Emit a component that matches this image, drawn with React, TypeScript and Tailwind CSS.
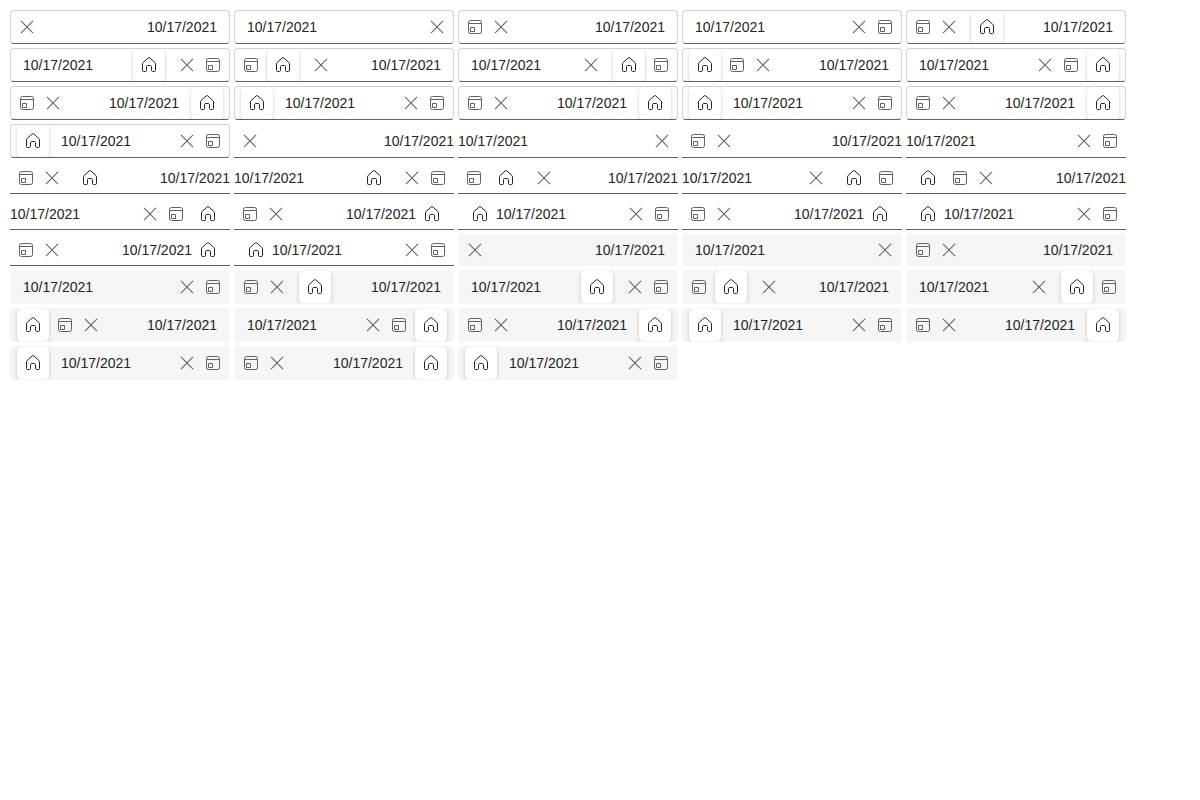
type Kind = "outlined" | "underlined" | "filled";
type Part = "T" | "H" | "C" | "X";

const CalendarIcon = () => (
  <svg className="block size-4 text-[#616161]" viewBox="0 0 16 16" fill="none" stroke="currentColor">
    <rect x="1.5" y="1.5" width="13" height="13" rx="2" />
    <path d="M1.5 4.5H14.5" />
    <path d="M3.5 8.5H7.5V12.5H3.5Z" />
  </svg>
);

const ClearIcon = () => (
  <svg className="block size-4 text-[#616161]" viewBox="0 0 16 16" fill="none" stroke="currentColor" strokeWidth="1.05" strokeLinecap="round">
    <path d="M2.2 2.2L13.8 13.8M13.8 2.2L2.2 13.8" />
  </svg>
);

const HomeIcon = () => (
  <svg className="block size-4 text-[#242424]" viewBox="0 0 16 16" fill="none" stroke="currentColor" strokeLinejoin="round">
    <path d="M1.5 6.9C1.5 6.3 1.7 5.9 2.1 5.5L7.2 0.9C7.7 0.5 8.3 0.5 8.8 0.9L13.9 5.5C14.3 5.9 14.5 6.3 14.5 6.9V13.4C14.5 14.1 14.1 14.5 13.4 14.5H11.5C10.9 14.5 10.5 14.1 10.5 13.4V9.7C10.5 8.9 10 8.5 9.3 8.5H6.7C6 8.5 5.5 8.9 5.5 9.7V13.4C5.5 14.1 5.1 14.5 4.5 14.5H2.6C1.9 14.5 1.5 14.1 1.5 13.4Z" />
  </svg>
);

const frames: Record<Kind, string> = {
  outlined: "rounded border border-[#d1d1d1] border-b-[#616161]",
  underlined: "border-b border-[#616161]",
  filled: "rounded bg-[#f5f5f5] border border-transparent",
};

function DateBox({ kind, parts }: { kind: Kind; parts: string }) {
  const list = parts.split("") as Part[];
  const flat = kind === "underlined";
  const textAt = list.indexOf("T");
  const hasHome = list.includes("H");
  const rtl = parts.endsWith("T") || parts.endsWith("TH");
  const height = flat ? "min-h-8" : kind === "outlined" || hasHome ? "min-h-[34px]" : "min-h-8";

  const homeMargin = (i: number) => {
    if (i === 0) return flat ? "ml-1.5" : "ml-1.5 mr-[3px]";
    if (i === list.length - 1) return flat ? "mr-1.5" : "mr-1.5 ml-[3px]";
    return rtl
      ? list[i - 1] === "X" ? "ml-[9px]" : "ml-[3px] mr-[9px]"
      : list[i + 1] === "X" ? "mr-[9px]" : "ml-[9px] mr-[3px]";
  };
  const flatHomeGap = (i: number) => {
    if (!flat) return "";
    if (i === 0 && list[1] !== "T") return "mr-[3px]";
    if (i === list.length - 1 && list[i - 1] !== "T") return "ml-[3px]";
    return "";
  };
  const iconEdge = (i: number) => (i === 0 ? "ml-[3px]" : i === list.length - 1 ? "mr-[3px]" : "");

  return (
    <div className={`flex w-[220px] items-center overflow-hidden ${height} ${frames[kind]}`}>
      {list.map((part, i) => {
        if (part === "T") {
          const pad = flat ? "" : textAt === 0 || textAt === list.length - 1 ? "px-3" : rtl ? "pr-[9px]" : "pl-[9px]";
          return (
            <div key={i} className={`grow text-sm leading-5 text-[#242424] ${rtl ? "text-right" : "text-left"} ${pad}`}>
              10/17/2021
            </div>
          );
        }
        if (part === "H") {
          const look = flat ? "" : "bg-white shadow-[0_0_2px_rgba(0,0,0,0.12),0_2px_4px_rgba(0,0,0,0.14)]";
          return (
            <button
              key={i}
              className={`-my-px flex h-8 w-8 shrink-0 items-center justify-center rounded ${look} ${homeMargin(i)} ${flatHomeGap(i)}`}
            >
              <HomeIcon />
            </button>
          );
        }
        return (
          <div key={i} className={`flex w-[26px] shrink-0 items-center justify-center ${iconEdge(i)}`}>
            {part === "C" ? <CalendarIcon /> : <ClearIcon />}
          </div>
        );
      })}
    </div>
  );
}

const variants = [
  "XT", "TX", "CXT", "TXC",
  "CXHT", "THXC", "CHXT", "TXHC", "HCXT", "TXCH",
  "CXTH", "HTXC", "CXTH", "HTXC", "CXTH", "HTXC",
];
const kinds: Kind[] = ["outlined", "underlined", "filled"];

export default function App() {
  return (
    <div className="flex w-[1136px] flex-wrap gap-1 p-2.5 font-['Liberation_Sans',Arial,sans-serif]">
      {kinds.map((kind) => variants.map((parts, i) => <DateBox key={`${kind}-${i}`} kind={kind} parts={parts} />))}
    </div>
  );
}
